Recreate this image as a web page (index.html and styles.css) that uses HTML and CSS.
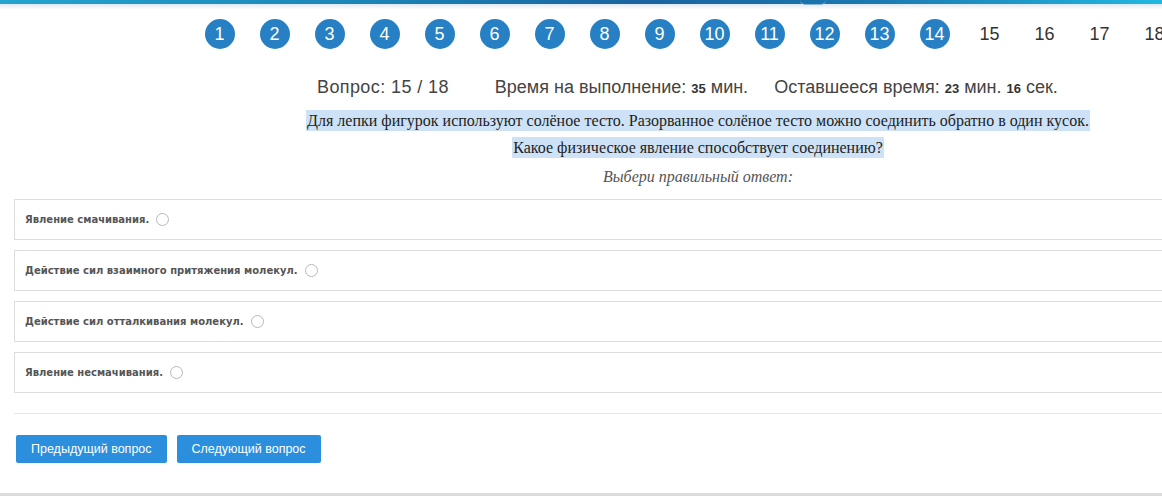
FILE: index.html
```html
<!DOCTYPE html>
<html lang="ru">
<head>
<meta charset="utf-8">
<title>Тест</title>
<link rel="stylesheet" href="styles.css">
</head>
<body>
<div class="topbar"><span class="topknob"></span></div>
<div class="topshade"></div>
<ul class="steps">
  <li><span class="dot">1</span></li>
  <li><span class="dot">2</span></li>
  <li><span class="dot">3</span></li>
  <li><span class="dot">4</span></li>
  <li><span class="dot">5</span></li>
  <li><span class="dot">6</span></li>
  <li><span class="dot">7</span></li>
  <li><span class="dot">8</span></li>
  <li><span class="dot">9</span></li>
  <li><span class="dot">10</span></li>
  <li><span class="dot">11</span></li>
  <li><span class="dot">12</span></li>
  <li><span class="dot">13</span></li>
  <li><span class="dot">14</span></li>
  <li><span class="num">15</span></li>
  <li><span class="num">16</span></li>
  <li><span class="num">17</span></li>
  <li><span class="num">18</span></li>
</ul>
<div class="stats">
  <span class="stat s1">Вопрос: 15 / 18</span>
  <span class="stat s2">Время на выполнение: <b>35</b> мин.</span>
  <span class="stat">Оставшееся время: <b>23</b> мин. <b>16</b> сек.</span>
</div>
<div class="main">
  <p class="q"><span class="hl">Для лепки фигурок используют солёное тесто. Разорванное солёное тесто можно соединить обратно в один кусок.</span></p>
  <p class="q"><span class="hl">Какое физическое явление способствует соединению?</span></p>
  <p class="hint">Выбери правильный ответ:</p>
  <div class="opt"><span class="opt-text">Явление смачивания.</span><span class="radio"></span></div>
  <div class="opt"><span class="opt-text">Действие сил взаимного притяжения молекул.</span><span class="radio"></span></div>
  <div class="opt"><span class="opt-text">Действие сил отталкивания молекул.</span><span class="radio"></span></div>
  <div class="opt"><span class="opt-text">Явление несмачивания.</span><span class="radio"></span></div>
  <div class="sep"></div>
  <div class="buttons">
    <button class="btn">Предыдущий вопрос</button>
    <button class="btn">Следующий вопрос</button>
  </div>
</div>
<div class="bottomline"></div>
</body>
</html>
```
FILE: styles.css
```css
html, body {
  margin: 0;
  padding: 0;
  background: #fff;
  overflow: hidden;
  width: 1162px;
  height: 496px;
}
body {
  font-family: "Liberation Sans", Arial, sans-serif;
  color: #333;
  position: relative;
}
.topbar {
  height: 4px;
  background: linear-gradient(to right, #24a4cf 0%, #1b86b8 30%, #1a64a0 55%, #1b78b0 75%, #22b8e0 100%);
  position: relative;
}
.topknob {
  position: absolute;
  left: 800px;
  top: 0;
  width: 26px;
  height: 4px;
  border-bottom: 1px solid #8fb7d4;
  border-radius: 0 0 13px 13px;
}
.topshade {
  height: 5px;
  background: linear-gradient(to bottom, #dfe9f0, #fbfcfd);
}
.steps {
  list-style: none;
  margin: 0;
  padding: 10px 0 0 192px;
  display: flex;
  height: 30px;
}
.steps li {
  flex: 0 0 55px;
  display: flex;
  justify-content: center;
  align-items: center;
  height: 30px;
}
.dot {
  width: 30px;
  height: 30px;
  border-radius: 50%;
  background: #2680c3;
  color: #fff;
  font-size: 18px;
  display: flex;
  align-items: center;
  justify-content: center;
}
.num {
  font-size: 18px;
  color: #333;
}
.stats {
  display: flex;
  padding-left: 317px;
  margin-top: 28px;
  font-size: 18px;
  color: #444;
  line-height: 20px;
  white-space: nowrap;
}
.stat b {
  font-size: 13px;
  color: #333;
}
.s1 { margin-right: 46px; letter-spacing: 0.4px; }
.s2 { margin-right: 26px; }
.main {
  margin-left: 14px;
  width: 1368px;
}
.q {
  margin: 0;
  text-align: center;
  font-family: "Liberation Serif", "Times New Roman", serif;
  font-size: 16px;
  color: #222;
  line-height: 27px;
}
.main .q:first-child {
  margin-top: 8px;
}
.hl {
  background: #cde2f6;
  padding: 2px 1px;
}
.hint {
  margin: 4px 0 10px;
  text-align: center;
  font-family: "Liberation Serif", "Times New Roman", serif;
  font-style: italic;
  font-size: 16px;
  color: #555;
  line-height: 24px;
}
.opt {
  box-sizing: border-box;
  height: 41px;
  border: 1px solid #dedede;
  margin-bottom: 10px;
  padding-left: 10px;
  display: flex;
  align-items: center;
}
.opt-text {
  font-family: "DejaVu Sans", Verdana, sans-serif;
  font-weight: bold;
  font-size: 10px;
  color: #555;
}
.radio {
  width: 11px;
  height: 11px;
  border: 1px solid #b8b8b8;
  border-radius: 50%;
  margin-left: 7px;
  background: #fff;
}
.sep {
  border-top: 1px solid #e6e6e6;
  margin-top: 20px;
}
.buttons {
  display: flex;
  gap: 10px;
  padding-left: 2px;
  margin-top: 21px;
}
.btn {
  height: 28px;
  padding: 0 15px;
  border: none;
  border-radius: 2px;
  background: #2b8fde;
  color: #fff;
  font-family: "Liberation Sans", Arial, sans-serif;
  font-size: 12.5px;
}
.bottomline {
  position: absolute;
  left: 0;
  right: 0;
  top: 493px;
  height: 3px;
  background: #dcdcdc;
}
```
